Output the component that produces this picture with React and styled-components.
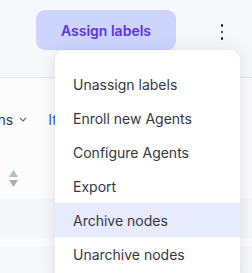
import React from "react";
import styled, { createGlobalStyle } from "styled-components";

const GlobalStyle = createGlobalStyle`
  html, body {
    margin: 0;
    padding: 0;
    background: #fcfcfd;
  }
  body {
    font-family: Inter, "Noto Sans", sans-serif;
    -webkit-font-smoothing: antialiased;
  }
`;

const Page = styled.div`
  position: relative;
  width: 252px;
  height: 273px;
  overflow: hidden;
  background: #fcfcfd;
`;

const Header = styled.div`
  height: 78px;
  display: flex;
  align-items: flex-start;
  padding: 10px 0 0 36px;
  box-sizing: border-box;
  background: #f7f8fb;
  border-bottom: 1px solid #e3e6ef;
`;

const AssignButton = styled.button`
  width: 140px;
  height: 40px;
  border: none;
  border-radius: 9px;
  background: #cdd4fe;
  color: #5b32e8;
  font-family: Inter, sans-serif;
  font-size: 14px;
  font-weight: 600;
  cursor: pointer;
`;

const Kebab = styled.button`
  margin: 10px 0 0 36px;
  width: 20px;
  height: 24px;
  border: none;
  background: transparent;
  display: flex;
  flex-direction: column;
  align-items: center;
  justify-content: center;
  gap: 4px;
  padding: 0;

  span {
    width: 2.5px;
    height: 2.5px;
    border-radius: 50%;
    background: #1d1e24;
  }
`;

const Toolbar = styled.div`
  height: 80px;
  display: flex;
  align-items: center;
  gap: 21px;
  margin-left: -45px;
  padding-top: 2px;
  box-sizing: border-box;
  font-size: 14px;
  color: #343741;
`;

const ToolbarItem = styled.span`
  display: flex;
  align-items: center;
  gap: 6px;
  color: ${(p) => (p.$link ? "#2b63d6" : "#343741")};
`;

const SortRow = styled.div`
  height: 40px;
  display: flex;
  align-items: flex-start;
  padding: 12px 0 0 9px;
  box-sizing: border-box;
`;

const Row = styled.div`
  height: ${(p) => p.$h}px;
  background: ${(p) => p.$bg};
`;

const Menu = styled.div`
  position: absolute;
  left: 55px;
  top: 50px;
  width: 185px;
  height: 240px;
  background: #fff;
  border-radius: 10px;
  padding-top: 17px;
  box-sizing: border-box;
  box-shadow: 0 0 18px rgba(40, 50, 80, 0.1), 0 4px 10px rgba(40, 50, 80, 0.05);
`;

const MenuItem = styled.div`
  height: 34px;
  display: flex;
  align-items: center;
  padding-left: 18px;
  font-size: 14px;
  color: #343741;
  background: ${(p) => (p.$active ? "#e8ebfb" : "transparent")};
`;

const items = [
  "Unassign labels",
  "Enroll new Agents",
  "Configure Agents",
  "Export",
  "Archive nodes",
  "Unarchive nodes",
];

export default function App() {
  return (
    <Page>
      <GlobalStyle />
      <Header>
        <AssignButton>Assign labels</AssignButton>
        <Kebab aria-label="More actions">
          <span />
          <span />
          <span />
        </Kebab>
      </Header>
      <Toolbar>
        <ToolbarItem>
          Columns
          <svg width="8" height="5" viewBox="0 0 8 5">
            <path d="M1 1l3 3 3-3" fill="none" stroke="#69707d" strokeWidth="1.2" />
          </svg>
        </ToolbarItem>
        <ToolbarItem $link>Items</ToolbarItem>
      </Toolbar>
      <SortRow>
        <svg width="9" height="18" viewBox="0 0 9 18">
          <path d="M4.5 0L9 7H0z" fill="#b6bbc8" />
          <path d="M0 10h9l-4.5 7z" fill="#a8aebc" />
        </svg>
      </SortRow>
      <Row $h={40} $bg="#f6f7f9" />
      <Row $h={8} $bg="#fcfcfd" />
      <Row $h={40} $bg="#f7f8fa" />
      <Menu>
        {items.map((label) => (
          <MenuItem key={label} $active={label === "Archive nodes"}>
            {label}
          </MenuItem>
        ))}
      </Menu>
    </Page>
  );
}
